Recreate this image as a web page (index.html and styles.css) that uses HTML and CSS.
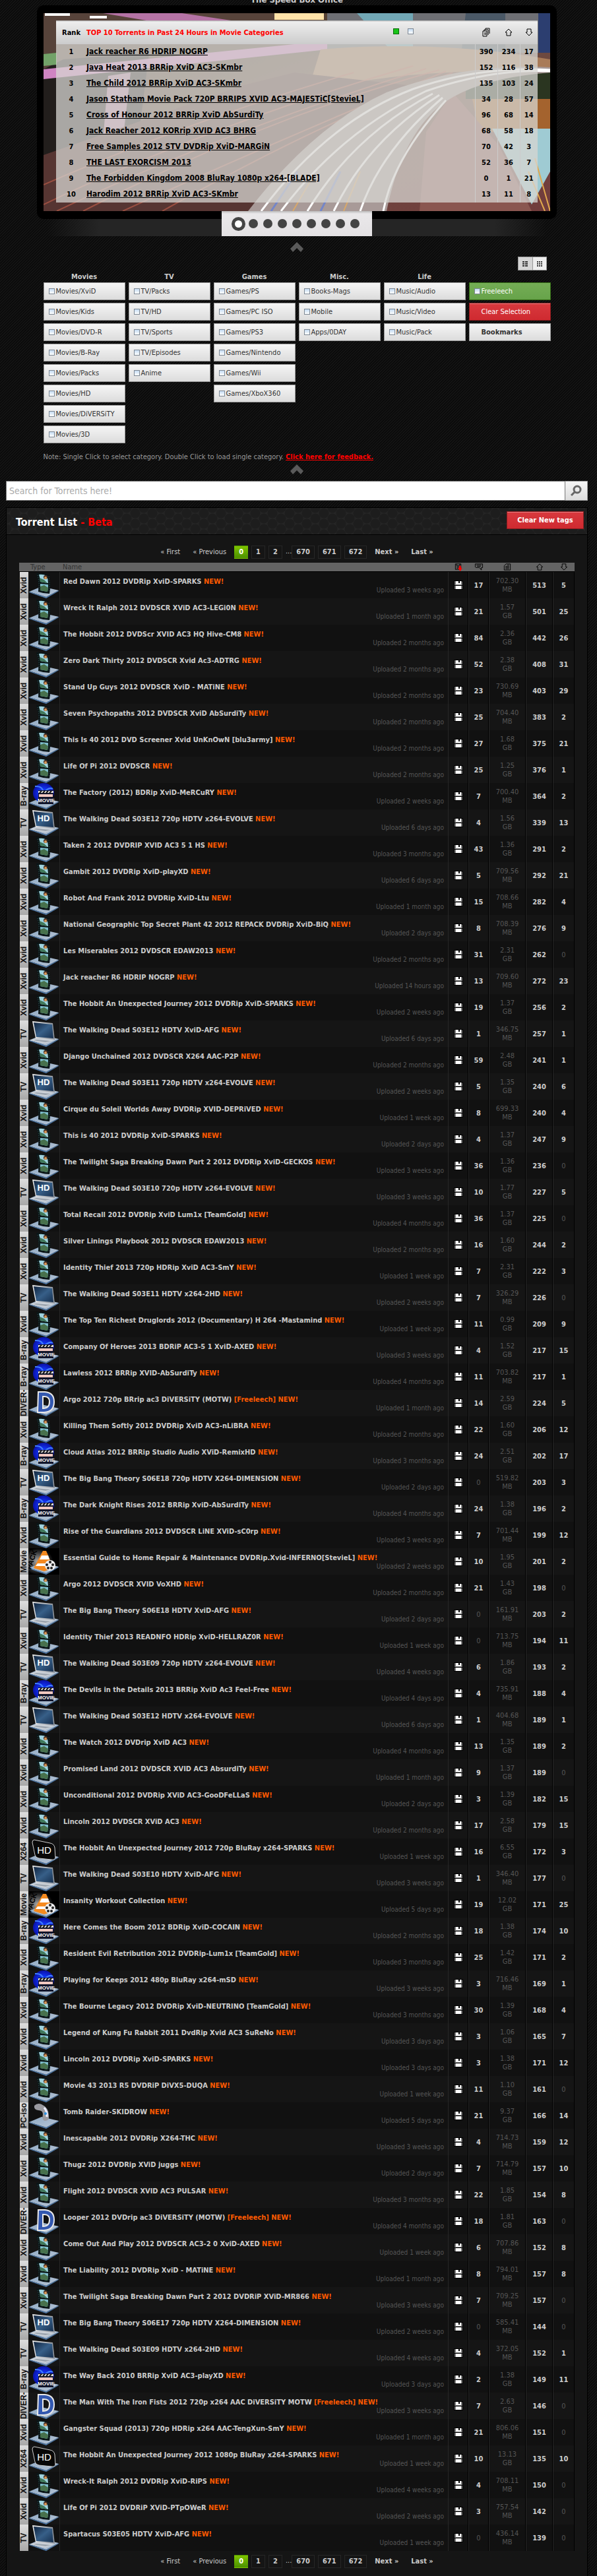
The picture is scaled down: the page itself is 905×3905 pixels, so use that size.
FILE: index.html
```html
<!DOCTYPE html>
<html lang="en">
<head>
    <meta charset="UTF-8">
    <meta name="viewport" content="width=device-width, initial-scale=1.0">
    <link rel="stylesheet" href="styles.css">
    <title>Torrent List</title>
</head>
<body>
    <!-- icons used by the rows -->
    <svg class="sprite" aria-hidden="true">
        <defs>
            <linearGradient id="g-base" x1="0" y1="0" x2="1" y2="1">
                <stop offset="0" stop-color="#8fa9c4"/><stop offset="1" stop-color="#b9c6d6"/>
            </linearGradient>
            <linearGradient id="g-screen" x1="0" y1="0" x2="1" y2="1">
                <stop offset="0" stop-color="#10243f"/><stop offset=".5" stop-color="#375f88"/><stop offset="1" stop-color="#17304f"/>
            </linearGradient>
            <linearGradient id="g-frame" x1="0" y1="0" x2="1" y2="0">
                <stop offset="0" stop-color="#eee"/><stop offset="1" stop-color="#8b9199"/>
            </linearGradient>
            <radialGradient id="g-disc">
                <stop offset="0" stop-color="#9ad8ff"/><stop offset=".3" stop-color="#1238ff"/><stop offset="1" stop-color="#0a12a8"/>
            </radialGradient>
            <radialGradient id="g-pack" cx=".3" cy=".5">
                <stop offset="0" stop-color="#aaa"/><stop offset="1" stop-color="#000"/>
            </radialGradient>
        </defs>
        <symbol id="base" viewBox="0 0 47 40">
            <path d="M1 30 L20 22 L46 28 L27 38 Z" fill="url(#g-base)"/>
            <path d="M1 30 L27 38 L46 28 V29 L27 40 L1 31 Z" fill="#4f79a8"/>
        </symbol>
        <symbol id="film" viewBox="0 0 47 40">
            <use href="#base"/>
            <path d="M12 2 Q23 1 31 5 Q35 18 32 33 Q23 33 15 30 Q16 16 12 2 Z" fill="#0a1516"/>
            <path d="M16 4 Q22 3 28 6 Q30 11 30 17 L18 15 Q18 10 16 4 Z" fill="#9fd3df"/>
            <path d="M17 9 L24 12 L29 17 L18 15 Z" fill="#417a5c"/>
            <circle cx="26" cy="8" r="3" fill="#4a2d22"/><circle cx="26" cy="9" r="2" fill="#d99a58"/>
            <path d="M18 18 L30 19 Q30 26 29 30 L18 28 Z" fill="#7fbfce"/>
            <path d="M18 22 L24 20 L30 24 L29 30 L18 28 Z" fill="#47714c"/>
            <path d="M14 5 Q17 16 16 29 M31 7 Q33 18 31 31" fill="none" stroke="#49666a" stroke-dasharray="1 2"/>
        </symbol>
        <symbol id="bray" viewBox="0 0 47 40">
            <use href="#base"/>
            <ellipse cx="23" cy="15" rx="16" ry="15" fill="url(#g-disc)"/>
            <path d="M10 5 Q22 4 23 15 Q31 5 37 9" fill="none" stroke="#3f7dff" stroke-width="2"/>
            <path d="M15 11 H38 V32 H15 Z" fill="#10142a"/>
            <path d="M15 12 H38 V15 H15 Z" fill="#ddd"/>
            <path d="M17 15 L20 12 M22 15 L25 12 M27 15 L30 12 M32 15 L35 12" stroke="#111" stroke-width="2"/>
            <path d="M16 17 H37 V21 H16 Z" fill="#f0c8c0"/>
            <text x="27" y="29" class="movie-text">MOVIE</text>
        </symbol>
        <symbol id="tv" viewBox="0 0 47 40">
            <use href="#base"/>
            <path d="M6 1 L37 4 L40 29 L11 27 Z" fill="url(#g-frame)"/>
            <path d="M8 3 L36 6 L38 27 L12 25 Z" fill="url(#g-screen)"/>
            <path d="M11 27 L40 29 L26 35 L2 30 Z" fill="#cdd2d8"/>
            <path d="M12 29 L34 31 L26 33 L8 30 Z" fill="#9aa3ad"/>
        </symbol>
        <symbol id="tvhd" viewBox="0 0 47 40">
            <use href="#tv"/>
            <text x="23" y="18" class="hd-text">HD</text>
        </symbol>
        <symbol id="hd" viewBox="0 0 47 40">
            <use href="#base"/>
            <path d="M9 2 L33 7 Q39 8 40 14 L41 29 Q40 33 35 32 L16 30 Q11 29 10 25 L6 6 Q6 2 9 2 Z" fill="#080808" stroke="#ccc" stroke-width="1"/>
            <text x="24" y="23" class="hd-text big">HD</text>
        </symbol>
        <symbol id="diver" viewBox="0 0 47 40">
            <use href="#base"/>
            <path d="M15 3 H25 Q39 4 39 18 Q39 33 24 34 H14 Z M22 10 V28 Q32 28 32 18 Q32 9 22 10 Z" fill="#3358b0" stroke="#e8e8e8" stroke-width="2" fill-rule="evenodd"/>
        </symbol>
        <symbol id="pack" viewBox="0 0 47 40">
            <path d="M0 0 H47 V40 H0 Z" fill="url(#g-pack)"/>
            <use href="#base"/>
            <text x="-30" y="14" class="pack-text" transform="rotate(-72)">PACK</text>
            <path d="M22 4 H27 L38 30 L24 35 L8 30 Z" fill="#f58a1f"/>
            <path d="M20 11 H30 L32 17 H17 Z M14 23 H35 L37 27 H11 Z" fill="#fff"/>
            <circle cx="33" cy="26" r="8" fill="#eee"/>
            <g fill="#222"><circle cx="33" cy="21" r="2"/><circle cx="28" cy="25" r="2"/><circle cx="37" cy="25" r="2"/><circle cx="30" cy="30" r="2"/><circle cx="35" cy="30" r="2"/></g>
        </symbol>
        <symbol id="pc" viewBox="0 0 47 40">
            <use href="#base"/>
            <path d="M9 5 Q14 0 20 3 Q31 8 31 20 Q32 28 25 28 Q20 27 22 18 Q22 12 15 12 Q8 11 9 5 Z" fill="#9a9aa0"/>
            <path d="M24 8 Q29 14 28 22" fill="none" stroke="#eef" stroke-width="3"/>
            <circle cx="26" cy="17" r="2" fill="#2a8fe0"/>
        </symbol>
        <symbol id="disk" viewBox="0 0 14 14">
            <path d="M0 0 H14 V14 H0 Z" fill="#000"/>
            <path d="M1 1 H12 L13 2 V13 H1 Z" fill="#777"/>
            <path d="M3 1 H11 V6 H3 Z M3 8 H11 V13 H3 Z" fill="#fff"/>
            <path d="M7 1 H9 V4 H7 Z M1 7 H13 V8 H1 Z" fill="#000"/>
        </symbol>
        <symbol id="up" viewBox="0 0 14 14"><path d="M7 2 L12 7 H10 V12 H4 V7 H2 Z" class="line"/></symbol>
        <symbol id="down" viewBox="0 0 14 14"><path d="M7 12 L12 7 H10 V2 H4 V7 H2 Z" class="line"/></symbol>
        <symbol id="files" viewBox="0 0 14 14">
            <path d="M6 1 H12 V9 M4 3 H10 V11 M2 5 H8 V13 H2 Z M4 8 H7 M4 10 H7 M6 1 V3 M4 3 V5" class="line"/>
        </symbol>
    </svg>

    <h2 class="box-title">The Speed Box Office</h2>
    <div class="tv-set">
        <div class="slide">
            <svg class="photo" viewBox="0 0 768 300" preserveAspectRatio="none" aria-hidden="true">
                <defs>
                    <linearGradient id="road" x1="0" y1="0" x2="1" y2="1">
                        <stop offset="0" stop-color="#36301f"/><stop offset=".5" stop-color="#6c4c40"/><stop offset="1" stop-color="#713c3c"/>
                    </linearGradient>
                </defs>
                <path d="M0 0 H768 V300 H0 Z" fill="url(#road)"/>
                <path d="M0 0 H400 L420 60 L0 90 Z" fill="#57433a"/>
                <path d="M0 85 L30 70 L160 60 L130 300 H0 Z" fill="#221e1c"/>
                <path d="M90 0 H210 L345 20 H210 Z" fill="#b573a5"/>
                <path d="M0 85 L430 42 V55 L0 100 Z" fill="#cf84c2"/>
                <path d="M98 95 L132 90 L120 195 H90 Z" fill="#b983a9"/>
                <path d="M0 62 L20 60 V78 L0 80 Z" fill="#72a268"/>
                <path d="M350 0 H425 V10 H350 Z" fill="#ffe2a8"/>
                <path d="M2 2 H40 M70 6 H96" stroke="#fff" stroke-width="4"/>
                <path d="M430 0 H768 V60 H430 Z" fill="#6e6f74"/>
                <path d="M475 0 H560 V60 H530 Z" fill="#71a7b5"/>
                <path d="M640 0 H700 V90 H630 Z" fill="#4a5866"/>
                <path d="M750 0 H768 V60 H750 Z" fill="#2c3e70"/>
                <path d="M420 55 Q600 40 768 70 V90 Q560 80 400 120 Z" fill="#a97b58"/>
                <path d="M640 90 H768 V130 H640 Z" fill="#2a3520"/>
                <path d="M650 130 H768 V180 H660 Z" fill="#a4632e"/>
                <path d="M680 175 H768 V240 L740 290 Z" fill="#9fcbd3"/>
                <path d="M580 180 L620 120 L690 200 L740 300 H570 Z" fill="#8a5650"/>
                <path d="M0 215 L300 110 L380 90 L560 110 L470 180 L370 300 H0 Z" fill="#563532"/>
                <g fill="none" stroke="#b65a48" stroke-width="2" opacity=".7">
                    <path d="M0 290 Q250 170 560 80"/><path d="M20 300 Q270 180 580 84"/><path d="M60 300 Q330 160 600 86"/>
                    <path d="M120 300 Q360 190 610 88"/><path d="M180 300 Q410 170 620 90"/><path d="M0 260 Q230 160 470 90"/>
                </g>
                <path d="M310 300 Q410 170 520 120 Q640 75 768 82 V90 Q640 100 590 150 Q540 200 520 300 Z" fill="#a89a98"/>
                <g fill="none" stroke="#fff" stroke-width="3">
                    <path d="M330 300 Q430 165 560 115 Q660 80 768 86"/><path d="M360 300 Q450 180 580 118 Q680 84 768 88"/>
                    <path d="M400 300 Q470 185 590 122"/><path d="M440 300 Q490 195 600 124"/><path d="M480 300 Q510 210 605 128"/><path d="M515 300 Q530 220 610 132"/>
                </g>
                <path d="M345 300 L385 240 M420 300 L450 240" stroke="#7486c8" stroke-width="3"/>
                <path d="M378 300 L410 245 M455 300 L480 240" stroke="#d8a86a" stroke-width="2"/>
                <path d="M745 220 L768 300 M735 240 L760 300" stroke="#e1a84d" stroke-width="2"/>
            </svg>
            <table class="top-ten">
                <thead>
                    <tr>
                        <th class="rank">Rank</th>
                        <th class="title">
                            <div class="title-row">
                                <span>TOP 10 Torrents in Past 24 Hours in Movie Categories</span>
                                <span class="picks">
                                    <input type="radio" name="top" aria-label="Movies" checked>
                                    <input type="radio" name="top" aria-label="All">
                                </span>
                            </div>
                        </th>
                        <th class="num first"><svg class="ico"><use href="#files"/></svg></th>
                        <th class="num"><svg class="ico"><use href="#up"/></svg></th>
                        <th class="num last"><svg class="ico"><use href="#down"/></svg></th>
                    </tr>
                </thead>
                <tbody>
                    <tr><td>1</td><td><a href="#">Jack reacher R6 HDRIP NOGRP</a></td><td>390</td><td>234</td><td>17</td></tr>
                    <tr><td>2</td><td><a href="#">Java Heat 2013 BRRip XviD AC3-SKmbr</a></td><td>152</td><td>116</td><td>38</td></tr>
                    <tr><td>3</td><td><a href="#">The Child 2012 BRRip XviD AC3-SKmbr</a></td><td>135</td><td>103</td><td>24</td></tr>
                    <tr><td>4</td><td><a href="#">Jason Statham Movie Pack 720P BRRIPS XVID AC3-MAJESTiC[StevieL]</a></td><td>34</td><td>28</td><td>57</td></tr>
                    <tr><td>5</td><td><a href="#">Cross of Honour 2012 BRRip XviD AbSurdiTy</a></td><td>96</td><td>68</td><td>14</td></tr>
                    <tr><td>6</td><td><a href="#">Jack Reacher 2012 KORrip XVID AC3 BHRG</a></td><td>68</td><td>58</td><td>18</td></tr>
                    <tr><td>7</td><td><a href="#">Free Samples 2012 STV DVDRip XviD-MARGiN</a></td><td>70</td><td>42</td><td>3</td></tr>
                    <tr><td>8</td><td><a href="#">THE LAST EXORCISM 2013</a></td><td>52</td><td>36</td><td>7</td></tr>
                    <tr><td>9</td><td><a href="#">The Forbidden Kingdom 2008 BluRay 1080p x264-[BLADE]</a></td><td>0</td><td>1</td><td>21</td></tr>
                    <tr><td>10</td><td><a href="#">Harodim 2012 BRRip XviD AC3-SKmbr</a></td><td>13</td><td>11</td><td>8</td></tr>
                </tbody>
            </table>
        </div>
        <div class="bullets">
            <button class="on" aria-label="Slide 1"></button>
            <button aria-label="Slide 2"></button>
            <button aria-label="Slide 3"></button>
            <button aria-label="Slide 4"></button>
            <button aria-label="Slide 5"></button>
            <button aria-label="Slide 6"></button>
            <button aria-label="Slide 7"></button>
            <button aria-label="Slide 8"></button>
            <button aria-label="Slide 9"></button>
        </div>
    </div>
    <div class="tv-stand"></div>
    <svg class="caret" viewBox="0 0 20 15"><path d="M10 0 L20 10 L16 15 L10 9 L4 15 L0 10 Z"/></svg>

    <div class="filters">
        <div class="views">
            <button class="active" aria-label="List view"><svg viewBox="0 0 8 8"><path d="M0 0h3v2H0zM4 0h4v2H4zM0 3h3v2H0zM4 3h4v2H4zM0 6h3v2H0zM4 6h4v2H4z"/></svg></button>
            <button aria-label="Grid view"><svg viewBox="0 0 8 8"><path d="M0 0h2v2H0zM3 0h2v2H3zM6 0h2v2H6zM0 3h2v2H0zM3 3h2v2H3zM6 3h2v2H6zM0 6h2v2H0zM3 6h2v2H3zM6 6h2v2H6z"/></svg></button>
        </div>
        <div class="cats">
            <div class="col">
                <h3>Movies</h3>
                <label><input type="checkbox">Movies/XviD</label>
                <label><input type="checkbox">Movies/Kids</label>
                <label><input type="checkbox">Movies/DVD-R</label>
                <label><input type="checkbox">Movies/B-Ray</label>
                <label><input type="checkbox">Movies/Packs</label>
                <label><input type="checkbox">Movies/HD</label>
                <label><input type="checkbox">Movies/DiVERSiTY</label>
                <label><input type="checkbox">Movies/3D</label>
            </div>
            <div class="col">
                <h3>TV</h3>
                <label><input type="checkbox">TV/Packs</label>
                <label><input type="checkbox">TV/HD</label>
                <label><input type="checkbox">TV/Sports</label>
                <label><input type="checkbox">TV/Episodes</label>
                <label><input type="checkbox">Anime</label>
            </div>
            <div class="col">
                <h3>Games</h3>
                <label><input type="checkbox">Games/PS</label>
                <label><input type="checkbox">Games/PC ISO</label>
                <label><input type="checkbox">Games/PS3</label>
                <label><input type="checkbox">Games/Nintendo</label>
                <label><input type="checkbox">Games/Wii</label>
                <label><input type="checkbox">Games/XboX360</label>
            </div>
            <div class="col">
                <h3>Misc.</h3>
                <label><input type="checkbox">Books-Mags</label>
                <label><input type="checkbox">Mobile</label>
                <label><input type="checkbox">Apps/0DAY</label>
            </div>
            <div class="col">
                <h3>Life</h3>
                <label><input type="checkbox">Music/Audio</label>
                <label><input type="checkbox">Music/Video</label>
                <label><input type="checkbox">Music/Pack</label>
            </div>
            <div class="col last">
                <label class="green"><input type="checkbox">Freeleech</label>
                <button class="red">Clear Selection</button>
                <button class="marks">Bookmarks</button>
            </div>
        </div>
        <p class="note">Note: Single Click to select category. Double Click to load single category. <a href="#">Click here for feedback.</a></p>
    </div>
    <svg class="caret" viewBox="0 0 20 15"><path d="M10 0 L20 10 L16 15 L10 9 L4 15 L0 10 Z"/></svg>

    <form class="search">
        <input type="text" placeholder="Search for Torrents here!" aria-label="Search">
        <button type="button" aria-label="Search"><svg viewBox="0 0 18 18"><circle cx="11" cy="7" r="5"/><path d="M8 10 L2 16"/></svg></button>
    </form>

    <div class="panel">
        <div class="panel-head">
            <h1>Torrent List <span>- Beta</span></h1>
            <button class="red">Clear New tags</button>
        </div>
        <div class="panel-body">
            <div class="pager">
                <span>« First</span><span>« Previous</span><a href="#" class="current">0</a><a href="#" class="page">1</a><a href="#" class="page">2</a><i>...</i><a href="#" class="page">670</a><a href="#" class="page">671</a><a href="#" class="page">672</a><a href="#">Next »</a><a href="#">Last »</a>
            </div>
            <table class="torrents">
                <colgroup>
                    <col class="c-tag"><col class="c-pic"><col><col class="c-dl"><col class="c-com"><col class="c-size"><col class="c-up"><col class="c-down">
                </colgroup>
                <thead>
                    <tr>
                        <th class="type" colspan="2">Type</th>
                        <th class="name">Name</th>
                        <th><svg class="ico" viewBox="0 0 14 14"><path d="M2 2 H11 V11 H2 Z M4 2 V5 H9 V2 M4 7 H8 M4 9 H8" class="line"/><path d="M8 5 H11 V9 H13 L10 14 L6 9 H8 Z" fill="#f00"/></svg></th>
                        <th><svg class="ico" viewBox="0 0 14 14"><path d="M1 2 H13 V8 H11 V12 L8 8 H2 L1 7 Z M3 4 H11 M4 6 H10" class="line"/></svg></th>
                        <th><svg class="ico" viewBox="0 0 14 14"><path d="M5 2 H12 V12 H2 V5 Z M7 4 H10 M4 6 H10 M4 8 H10 M4 10 H10" class="line"/></svg></th>
                        <th><svg class="ico"><use href="#up"/></svg></th>
                        <th><svg class="ico"><use href="#down"/></svg></th>
                    </tr>
                </thead>
                <tbody id="rows"></tbody>
            </table>
            <div class="pager bottom">
                <span>« First</span><span>« Previous</span><a href="#" class="current">0</a><a href="#" class="page">1</a><a href="#" class="page">2</a><i>...</i><a href="#" class="page">670</a><a href="#" class="page">671</a><a href="#" class="page">672</a><a href="#">Next »</a><a href="#">Last »</a>
            </div>
        </div>
    </div>
    <script src="script.js"></script>
</body>
</html>
```
FILE: styles.css
```css
*{
    box-sizing: border-box;
}
body{
    margin: 0px;
    padding: 0px 14px 0px 9px;
    color: #ccc;
    font: 11px/13px "DejaVu Sans Condensed", "DejaVu Sans", sans-serif;
    background: repeating-linear-gradient(135deg, #0a0a0a 0px, #0a0a0a 1px, #191919 2px, #0a0a0a 3px);
    overflow-x: hidden;
}
h1, h2, h3, p, form{
    margin: 0px;
}
button, input{
    font: inherit;
}
.sprite{
    position: absolute;
    width: 0px;
    height: 0px;
}
.line{
    fill: none;
    stroke: #000;
    stroke-width: 1px;
}
.ico{
    display: block;
    width: 14px;
    height: 14px;
    margin: 0px auto;
}

/* slider */
.box-title{
    height: 16px;
    margin-top: -8px;
    font-size: 13px;
    line-height: 16px;
    text-align: center;
}
.tv-set{
    position: relative;
    max-width: 788px;
    margin: 0px auto;
    padding: 12px 10px;
    background: #000;
    border-radius: 10px;
}
.slide{
    position: relative;
    height: 300px;
    padding: 11px 19px;
}
.photo{
    position: absolute;
    top: 0px;
    left: 0px;
    width: 100%;
    height: 100%;
}
.top-ten{
    position: relative;
    width: 100%;
    border-collapse: collapse;
    color: #000;
    font-weight: bold;
    background: rgba(215, 213, 210, 0.75);
}
.top-ten th{
    height: 35px;
    padding: 0px;
    border-top: 1px solid #bbb;
    background: linear-gradient(#eee, #cbcbcb);
}
.top-ten td{
    height: 24px;
    padding: 0px;
    text-align: center;
}
.top-ten td:nth-child(n+3){
    border-left: 1px solid #ccc;
}
.top-ten td:nth-child(2){
    text-align: left;
    font-size: 12px;
}
.top-ten td a{
    color: #000;
}
.rank{
    width: 46px;
}
.title-row{
    display: flex;
    justify-content: space-between;
    color: #f00;
}
.picks{
    display: flex;
    gap: 13px;
    padding-right: 93px;
}
.num{
    width: 34px;
}
.num.last{
    width: 27px;
}
input[type=radio], input[type=checkbox]{
    appearance: none;
    width: 9px;
    height: 9px;
    margin: 0px;
    border: 1px solid #7d8894;
    background: linear-gradient(#c5dcf3, #fff);
}
input[type=radio]:checked{
    border-color: #0a6a0a;
    background: #18c418;
}
.bullets{
    position: absolute;
    top: 312px;
    left: 50%;
    display: flex;
    align-items: center;
    justify-content: center;
    gap: 8px;
    width: 228px;
    height: 38px;
    margin-left: -114px;
    background: linear-gradient(#bbb, #eae8ea 4px, #e3e1e3);
}
.bullets button{
    width: 14px;
    height: 14px;
    padding: 0px;
    border: 0px;
    border-radius: 50%;
    background: #444;
}
.bullets .on{
    width: 21px;
    height: 21px;
    margin: 0px -3px 0px -4px;
    border: 5px solid #444;
    background: #fff;
}
.tv-stand{
    max-width: 788px;
    height: 26px;
    margin: 0px auto 9px;
    background: linear-gradient(90deg, transparent 2%, #252525 12%, #252525 88%, transparent 98%);
}
.caret{
    display: block;
    width: 20px;
    height: 15px;
    margin: 0px auto;
    fill: #5a5a5a;
}

/* categories */
.filters{
    max-width: 769px;
    margin: 7px auto 5px;
}
.views{
    display: flex;
    justify-content: flex-end;
    padding-right: 6px;
}
.views button{
    width: 22px;
    height: 21px;
    padding: 5px 6px;
    border: 1px solid #999;
    background: #eee;
}
.views .active{
    background: #d5d5d5;
    border-right: 0px;
}
.views svg{
    display: block;
    width: 8px;
    height: 8px;
    fill: #333;
}
.cats{
    display: grid;
    grid-template-columns: repeat(6, 1fr);
    gap: 5px;
}
.col{
    display: flex;
    flex-direction: column;
    gap: 4px;
}
.col.last{
    padding-top: 18px;
}
.col h3{
    height: 14px;
    padding-top: 3px;
    font-size: 11px;
    line-height: 13px;
    text-align: center;
}
.col label, .col button{
    display: flex;
    align-items: center;
    gap: 2px;
    height: 27px;
    padding: 0px 7px;
    color: #333;
    border: 1px solid #999;
    background: linear-gradient(#f5f5f5, #dcdcdc);
}
.col button{
    padding-left: 18px;
    font-weight: normal;
}
.col .marks{
    font-weight: bold;
}
.col .green{
    color: #fff;
    border-color: #336b14;
    background: linear-gradient(#74ad55, #67a34a);
}
.col .red, .red{
    color: #fff;
    border: 1px solid #8e1c1f;
    background: linear-gradient(#d8393e, #cf2a30);
    box-shadow: inset 0px 1px 0px #e77b7e;
}
.note{
    padding-top: 14px;
    color: #999;
}
.note a{
    color: #f00;
    font-weight: bold;
}

/* search */
.search{
    display: flex;
    height: 30px;
    margin: 10px 0px;
}
.search input{
    flex: 1;
    min-width: 0px;
    padding: 0px 4px;
    border: 1px solid #777;
    font-size: 14px;
    background: #fff;
}
.search input::placeholder{
    color: #aaa;
}
.search button{
    width: 34px;
    padding: 0px 7px;
    border: 1px solid #999;
    border-left: 0px;
    background: linear-gradient(#f5f5f5, #dcdcdc);
}
.search svg{
    display: block;
    width: 18px;
    height: 18px;
    fill: none;
    stroke: #666;
    stroke-width: 3px;
}

/* list */
.panel{
    border: 1px solid #000;
    background: #151515;
}
.panel-head{
    display: flex;
    align-items: flex-start;
    justify-content: space-between;
    height: 41px;
    padding: 5px 5px 0px 14px;
    border-bottom: 1px solid #000;
    background:
        radial-gradient(circle, #1d1d1d 7px, transparent 8px) 0px 0px / 26px 16px,
        radial-gradient(circle, #1d1d1d 7px, transparent 8px) 13px 8px / 26px 16px,
        #252525;
}
.panel-head h1{
    color: #fff;
    font-size: 16px;
    line-height: 33px;
}
.panel-head span{
    color: #f00;
}
.panel-head button{
    width: 117px;
    height: 27px;
    font-weight: bold;
}
.panel-body{
    padding: 16px 19px;
}
.pager{
    display: flex;
    justify-content: center;
    gap: 5px;
    height: 20px;
    margin-bottom: 6px;
    line-height: 18px;
}
.pager a, .pager span{
    padding: 0px 6px;
    border: 1px solid transparent;
    color: #ccc;
    text-decoration: none;
}
.pager a{
    font-weight: bold;
}
.pager i{
    margin-right: -5px;
    font-style: normal;
}
.pager .page{
    border-color: #262626;
}
.pager .current{
    color: #fff;
    background: linear-gradient(#7fc400, #4c9100);
}
.pager.bottom{
    margin: 6px 0px 0px;
}
.torrents{
    width: 100%;
    table-layout: fixed;
    border-collapse: separate;
    border-spacing: 0px;
}
.c-tag{
    width: 14px;
}
.c-pic{
    width: 47px;
}
.c-dl, .c-com{
    width: 31px;
}
.c-size{
    width: 56px;
}
.c-up{
    width: 41px;
}
.c-down{
    width: 33px;
}
.torrents th{
    height: 14px;
    padding: 0px;
    border-bottom: 1px solid #000;
    color: #333;
    font-weight: normal;
    line-height: 13px;
    text-align: left;
    background: #646464;
}
.torrents th.type{
    padding-left: 17px;
}
.torrents th.name{
    padding-left: 5px;
}
.torrents .ico{
    height: 13px;
}
.torrents td{
    height: 40px;
    padding: 0px;
    text-align: center;
    font-weight: bold;
}
.torrents tr:nth-child(odd) td{
    background: #111;
}
.torrents td:nth-child(n+4){
    border-left: 1px solid #262626;
    border-right: 1px solid #000;
}
.torrents tbody td.tag{
    color: #111;
    font: bold 12px/13px "Liberation Sans", sans-serif;
    background: linear-gradient(#ddd, #a8a8a8);
    border-left: 1px solid #111;
}
.tag div{
    width: 13px;
    height: 40px;
    overflow: hidden;
    writing-mode: vertical-rl;
    transform: rotate(180deg);
}
.pic svg{
    display: block;
    width: 47px;
    height: 40px;
}
.torrents td.info{
    padding: 9px 6px 6px 5px;
    border-left: 1px solid #262626;
    text-align: left;
    vertical-align: top;
}
.info a{
    display: block;
    height: 12px;
    color: #ccc;
    line-height: 12px;
    text-decoration: none;
}
.info b{
    color: #ff5a00;
}
.info small{
    display: block;
    color: #555;
    font-size: 10px;
    font-weight: normal;
    text-align: right;
}
.dl button{
    display: block;
    width: 14px;
    height: 14px;
    margin: 0px auto;
    padding: 0px;
    border: 0px;
    background: none;
}
.dl svg{
    display: block;
    width: 14px;
    height: 14px;
}
.torrents td.size, .torrents td.zero{
    color: #555;
    font-weight: normal;
}
.movie-text{
    fill: #fff;
    font: bold 8px "Liberation Sans", sans-serif;
    text-anchor: middle;
}
.hd-text{
    fill: #fff;
    font: bold 13px "Liberation Sans", sans-serif;
    text-anchor: middle;
}
.hd-text.big{
    font-size: 15px;
    font-weight: normal;
}
.pack-text{
    fill: #000;
    font: bold 11px "Liberation Sans", sans-serif;
}
```
FILE: script.js
```js
// [icon, name, age, comments, size, seeders, leechers]
let torrents = [
    ["film", "Red Dawn 2012 DVDRip XviD-SPARKS", "3 weeks", 17, "702.30 MB", 513, 5],
    ["film", "Wreck It Ralph 2012 DVDSCR XViD AC3-LEGi0N", "1 month", 21, "1.57 GB", 501, 25],
    ["film", "The Hobbit 2012 DVDScr XVID AC3 HQ Hive-CM8", "2 months", 84, "2.36 GB", 442, 26],
    ["film", "Zero Dark Thirty 2012 DVDSCR Xvid Ac3-ADTRG", "2 months", 52, "2.38 GB", 408, 31],
    ["film", "Stand Up Guys 2012 DVDSCR XviD - MATiNE", "2 months", 23, "730.69 MB", 403, 29],
    ["film", "Seven Psychopaths 2012 DVDSCR XviD AbSurdiTy", "2 months", 25, "704.40 MB", 383, 2],
    ["film", "This Is 40 2012 DVD Screener Xvid UnKnOwN [blu3army]", "2 months", 27, "1.68 GB", 375, 21],
    ["film", "Life Of Pi 2012 DVDSCR", "2 months", 25, "1.25 GB", 376, 1],
    ["bray", "The Factory (2012) BDRip XviD-MeRCuRY", "2 weeks", 7, "700.40 MB", 364, 2],
    ["tvhd", "The Walking Dead S03E12 720p HDTV x264-EVOLVE", "6 days", 4, "1.56 GB", 339, 13],
    ["film", "Taken 2 2012 DVDRIP XVID AC3 5 1 HS", "3 months", 43, "1.36 GB", 291, 2],
    ["film", "Gambit 2012 DVDRip XviD-playXD", "6 days", 5, "709.56 MB", 292, 21],
    ["film", "Robot And Frank 2012 DVDRip XviD-Ltu", "1 month", 15, "708.66 MB", 282, 4],
    ["film", "National Geographic Top Secret Plant 42 2012 REPACK DVDRip XviD-BiQ", "2 days", 8, "708.39 MB", 276, 9],
    ["film", "Les Miserables 2012 DVDSCR EDAW2013", "2 months", 31, "2.31 GB", 262, 0],
    ["film", "Jack reacher R6 HDRIP NOGRP", "14 hours", 13, "709.60 MB", 272, 23],
    ["film", "The Hobbit An Unexpected Journey 2012 DVDRip XviD-SPARKS", "2 weeks", 19, "1.37 GB", 256, 2],
    ["tv", "The Walking Dead S03E12 HDTV XviD-AFG", "6 days", 1, "346.75 MB", 257, 1],
    ["film", "Django Unchained 2012 DVDSCR X264 AAC-P2P", "2 months", 59, "2.48 GB", 241, 1],
    ["tvhd", "The Walking Dead S03E11 720p HDTV x264-EVOLVE", "2 weeks", 5, "1.35 GB", 240, 6],
    ["film", "Cirque du Soleil Worlds Away DVDRip XVID-DEPRiVED", "1 week", 8, "699.33 MB", 240, 4],
    ["film", "This is 40 2012 DVDRip XviD-SPARKS", "2 days", 4, "1.37 GB", 247, 9],
    ["film", "The Twilight Saga Breaking Dawn Part 2 2012 DVDRip XviD-GECKOS", "3 weeks", 36, "1.36 GB", 236, 0],
    ["tvhd", "The Walking Dead S03E10 720p HDTV x264-EVOLVE", "3 weeks", 10, "1.77 GB", 227, 5],
    ["film", "Total Recall 2012 DVDRip XviD Lum1x [TeamGold]", "4 months", 36, "1.37 GB", 225, 0],
    ["film", "Silver Linings Playbook 2012 DVDSCR EDAW2013", "2 months", 16, "1.60 GB", 244, 2],
    ["film", "Identity Thief 2013 720p HDRip XviD AC3-SmY", "1 week", 7, "2.31 GB", 222, 3],
    ["tv", "The Walking Dead S03E11 HDTV x264-2HD", "2 weeks", 7, "326.29 MB", 226, 0],
    ["film", "The Top Ten Richest Druglords 2012 (Documentary) H 264 -Mastamind", "1 week", 11, "0.99 GB", 209, 9],
    ["bray", "Company Of Heroes 2013 BDRiP AC3-5 1 XviD-AXED", "3 weeks", 4, "1.52 GB", 217, 15],
    ["bray", "Lawless 2012 BRRip XVID-AbSurdiTy", "4 months", 11, "703.82 MB", 217, 1],
    ["diver", "Argo 2012 720p BRrip ac3 DiVERSiTY (MOTW)", "1 month", 14, "2.59 GB", 224, 5],
    ["film", "Killing Them Softly 2012 DVDRip XviD AC3-nLiBRA", "2 months", 22, "1.60 GB", 206, 12],
    ["bray", "Cloud Atlas 2012 BRRip Studio Audio XViD-RemixHD", "3 months", 24, "2.51 GB", 202, 17],
    ["tvhd", "The Big Bang Theory S06E18 720p HDTV X264-DIMENSION", "2 days", 0, "519.82 MB", 203, 3],
    ["bray", "The Dark Knight Rises 2012 BRRip XviD-AbSurdiTy", "4 months", 24, "1.38 GB", 196, 2],
    ["film", "Rise of the Guardians 2012 DVDSCR LiNE XViD-sC0rp", "3 weeks", 7, "701.44 MB", 199, 12],
    ["pack", "Essential Guide to Home Repair &amp; Maintenance DVDRip.Xvid-INFERNO[StevieL]", "2 weeks", 10, "1.95 GB", 201, 2],
    ["film", "Argo 2012 DVDSCR XVID VoXHD", "2 months", 21, "1.43 GB", 198, 0],
    ["tv", "The Big Bang Theory S06E18 HDTV XviD-AFG", "2 days", 0, "161.91 MB", 203, 2],
    ["film", "Identity Thief 2013 READNFO HDRip XviD-HELLRAZ0R", "1 week", 0, "713.75 MB", 194, 11],
    ["tvhd", "The Walking Dead S03E09 720p HDTV x264-EVOLVE", "4 weeks", 6, "1.86 GB", 193, 2],
    ["bray", "The Devils in the Details 2013 BRRip XviD Ac3 Feel-Free", "4 days", 4, "735.91 MB", 188, 4],
    ["tv", "The Walking Dead S03E12 HDTV x264-EVOLVE", "6 days", 1, "404.68 MB", 189, 1],
    ["film", "The Watch 2012 DVDrip XviD AC3", "4 months", 13, "1.35 GB", 189, 2],
    ["film", "Promised Land 2012 DVDSCR XVID AC3 AbsurdiTy", "1 month", 9, "1.37 GB", 189, 0],
    ["film", "Unconditional 2012 DVDRip XViD AC3-GooDFeLLaS", "2 days", 3, "1.39 GB", 182, 15],
    ["film", "Lincoln 2012 DVDSCR XViD AC3", "2 months", 17, "2.58 GB", 179, 15],
    ["hd", "The Hobbit An Unexpected Journey 2012 720p BluRay x264-SPARKS", "1 week", 16, "6.55 GB", 172, 3],
    ["tv", "The Walking Dead S03E10 HDTV XviD-AFG", "3 weeks", 1, "346.40 MB", 177, 0],
    ["pack", "Insanity Workout Collection", "5 days", 19, "12.02 GB", 171, 25],
    ["bray", "Here Comes the Boom 2012 BDRip XviD-COCAIN", "2 months", 18, "1.38 GB", 174, 10],
    ["film", "Resident Evil Retribution 2012 DVDRip-Lum1x [TeamGold]", "3 months", 25, "1.42 GB", 171, 2],
    ["bray", "Playing for Keeps 2012 480p BluRay x264-mSD", "3 weeks", 3, "716.46 MB", 169, 1],
    ["film", "The Bourne Legacy 2012 DVDRip XviD-NEUTRINO [TeamGold]", "3 months", 30, "1.39 GB", 168, 4],
    ["film", "Legend of Kung Fu Rabbit 2011 DvdRip Xvid AC3 SuReNo", "3 days", 3, "1.06 GB", 165, 7],
    ["film", "Lincoln 2012 DVDRip XviD-SPARKS", "3 days", 3, "1.38 GB", 171, 12],
    ["film", "Movie 43 2013 R5 DVDRiP DiVX5-DUQA", "1 week", 11, "1.10 GB", 161, 0],
    ["pc", "Tomb Raider-SKIDROW", "5 days", 21, "9.37 GB", 166, 14],
    ["film", "Inescapable 2012 DVDRip X264-THC", "3 weeks", 4, "714.73 MB", 159, 12],
    ["film", "Thugz 2012 DVDRip XViD juggs", "2 days", 7, "714.79 MB", 157, 10],
    ["film", "Flight 2012 DVDSCR XVID AC3 PULSAR", "3 months", 22, "1.85 GB", 154, 8],
    ["diver", "Looper 2012 DVDrip ac3 DiVERSiTY (MOTW)", "4 months", 18, "1.81 GB", 163, 0],
    ["film", "Come Out And Play 2012 DVDSCR AC3-2 0 XviD-AXED", "1 week", 6, "707.86 MB", 152, 8],
    ["film", "The Liability 2012 DVDRip XviD - MATiNE", "1 month", 8, "794.01 MB", 157, 8],
    ["film", "The Twilight Saga Breaking Dawn Part 2 2012 DVDRiP XViD-MR866", "3 weeks", 7, "709.25 MB", 157, 0],
    ["tvhd", "The Big Bang Theory S06E17 720p HDTV X264-DIMENSION", "2 weeks", 0, "585.41 MB", 144, 0],
    ["tv", "The Walking Dead S03E09 HDTV x264-2HD", "4 weeks", 4, "372.05 MB", 152, 1],
    ["bray", "The Way Back 2010 BRRip XviD AC3-playXD", "3 days", 2, "1.38 GB", 149, 11],
    ["diver", "The Man With The Iron Fists 2012 720p x264 AAC DiVERSiTY MOTW", "3 weeks", 7, "2.63 GB", 146, 0],
    ["film", "Gangster Squad (2013) 720p HDRip x264 AAC-TengXun-SmY", "1 month", 21, "806.06 MB", 151, 0],
    ["hd", "The Hobbit An Unexpected Journey 2012 1080p BluRay x264-SPARKS", "1 week", 10, "13.13 GB", 135, 10],
    ["film", "Wreck-It Ralph 2012 DVDRip XviD-RiPS", "4 weeks", 4, "708.11 MB", 150, 0],
    ["film", "Life Of Pi 2012 DVDRiP XViD-PTpOWeR", "2 weeks", 3, "757.54 MB", 142, 0],
    ["tv", "Spartacus S03E05 HDTV XviD-AFG", "1 week", 0, "436.14 MB", 139, 0]
];
let tags = {
    film: "Xvid", bray: "B-ray", tv: "TV", tvhd: "TV",
    hd: "X264", diver: "DIVER-", pack: "Movie", pc: "PC-iso"
};

function cell(count){
    return `<td class="${count ? "" : "zero"}">${count}</td>`;
}

let html = "";
for(let [icon, name, age, comments, size, up, down] of torrents){
    // diversity releases are always freeleech
    let free = icon == "diver" ? "[Freeleech] " : "";
    html += `<tr>
        <td class="tag"><div>${tags[icon]}</div></td>
        <td class="pic"><svg><use href="#${icon}"/></svg></td>
        <td class="info"><a href="#">${name} <b>${free}NEW!</b></a><small>Uploaded ${age} ago</small></td>
        <td class="dl"><button aria-label="Download"><svg><use href="#disk"/></svg></button></td>
        ${cell(comments)}
        <td class="size">${size.replace(" ", "<br>")}</td>
        ${cell(up)}${cell(down)}
    </tr>`;
}
document.getElementById("rows").innerHTML = html;
```
